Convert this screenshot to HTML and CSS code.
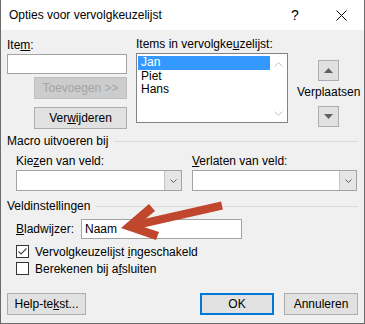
FILE: index.html
```html
<!DOCTYPE html>
<html lang="nl">
<head>
    <meta charset="UTF-8">
    <title>Opties voor vervolgkeuzelijst</title>
    <link rel="stylesheet" href="styles.css">
</head>
<body>

    <div class="dialog">
        <!-- titelbalk -->
        <div class="titlebar">
            <span class="title">Opties voor vervolgkeuzelijst</span>
            <span class="caption-btn help">?</span>
            <span class="caption-btn">
                <svg width="11" height="11" viewBox="0 0 11 11"><path d="M0.5 0.5 L10.5 10.5 M10.5 0.5 L0.5 10.5" stroke="#000" stroke-width="1"/></svg>
            </span>
        </div>

        <div class="content">
            <!-- items -->
            <div class="items">
                <div class="item-col">
                    <div class="label first">Ite<u>m</u>:</div>
                    <div class="textbox item-input"></div>
                    <button class="btn add" disabled>Toevoegen &gt;&gt;</button>
                    <button class="btn remove">Ver<u>w</u>ijderen</button>
                </div>

                <div class="list-col">
                    <div class="label list-label">Items in vervolgke<u>u</u>zelijst:</div>
                    <div class="listbox">
                        <ul class="entries">
                            <li class="selected">Jan</li>
                            <li>Piet</li>
                            <li>Hans</li>
                        </ul>
                        <div class="scroll">
                            <svg width="9" height="5" viewBox="0 0 9 5"><path d="M0.5 4.5 L4.5 0.5 L8.5 4.5" fill="none" stroke="#c2c2c2"/></svg>
                            <svg width="9" height="5" viewBox="0 0 9 5"><path d="M0.5 0.5 L4.5 4.5 L8.5 0.5" fill="none" stroke="#c2c2c2"/></svg>
                        </div>
                    </div>
                </div>

                <div class="move-col">
                    <button class="move-btn up">
                        <svg width="9" height="5" viewBox="0 0 9 5"><path d="M0 5 L4.5 0 L9 5 Z" fill="#606060"/></svg>
                    </button>
                    <span class="move-label">Verplaatsen</span>
                    <button class="move-btn down">
                        <svg width="9" height="5" viewBox="0 0 9 5"><path d="M0 0 L4.5 5 L9 0 Z" fill="#606060"/></svg>
                    </button>
                </div>
            </div>

            <!-- macro's -->
            <div class="group-title macro-title">Macro uitvoeren bij</div>
            <div class="macro">
                <div class="field">
                    <div class="label">Kie<u>z</u>en van veld:</div>
                    <div class="combo">
                        <span class="drop">
                            <svg width="7" height="4" viewBox="0 0 7 4"><path d="M0.5 0.5 L3.5 3.5 L6.5 0.5" fill="none" stroke="#5a5a5a"/></svg>
                        </span>
                    </div>
                </div>
                <div class="field">
                    <div class="label"><u>V</u>erlaten van veld:</div>
                    <div class="combo">
                        <span class="drop">
                            <svg width="7" height="4" viewBox="0 0 7 4"><path d="M0.5 0.5 L3.5 3.5 L6.5 0.5" fill="none" stroke="#5a5a5a"/></svg>
                        </span>
                    </div>
                </div>
            </div>

            <!-- veldinstellingen -->
            <div class="group-title field-title">Veldinstellingen</div>
            <div class="bookmark">
                <span class="bookmark-label"><u>B</u>ladwijzer:</span>
                <div class="textbox bookmark-input">Naam</div>
            </div>
            <div class="check first-check">
                <span class="box">
                    <svg width="11" height="11" viewBox="0 0 11 11"><path d="M1.5 5.5 L4 8 L9.5 2.5" fill="none" stroke="#444" stroke-width="1.1"/></svg>
                </span>
                <span>Vervolgkeuzelijst <u>i</u>ngeschakeld</span>
            </div>
            <div class="check">
                <span class="box"></span>
                <span>Berekenen bij a<u>f</u>sluiten</span>
            </div>

            <!-- knoppen -->
            <div class="footer">
                <button class="btn help-btn">Help-te<u>k</u>st...</button>
                <div class="actions">
                    <button class="btn ok">OK</button>
                    <button class="btn cancel">Annuleren</button>
                </div>
            </div>
        </div>

        <!-- rode pijl over de dialoog -->
        <svg class="pointer" width="365" height="324" viewBox="0 0 365 324">
            <path d="M222 205.5 L136 225" stroke="#c0462e" stroke-width="8" fill="none"/>
            <polygon points="121,228 149,204 155,211 138,225 159,232 156,240" fill="#c0462e"/>
        </svg>
    </div>

</body>
</html>
```

FILE: styles.css
```css
body, html {
    margin: 0;
    padding: 0;
    overflow: hidden;
    background: #f0f0f0;
    font-family: "Liberation Sans", Arial, sans-serif;
    font-size: 12px;
    color: #000;
}

u {
    text-decoration-thickness: 1px;
    text-underline-offset: 1px;
}

.dialog {
    position: relative;
    width: 365px;
    height: 324px;
    box-sizing: border-box;
    border: 1px solid #6b6b6b;
    border-top: none;
    background: #f0f0f0;
}

/* titelbalk */
.titlebar {
    display: flex;
    align-items: center;
    height: 30px;
    background: #fff;
}

.title {
    flex: 1;
    padding-left: 8px;
}

.caption-btn {
    display: flex;
    align-items: center;
    justify-content: center;
    width: 46px;
    height: 30px;
}

.help {
    font-size: 14px;
}

/* inhoud */
.content {
    padding: 0 6px;
}

.label {
    line-height: 15px;
    white-space: nowrap;
}

.items {
    display: grid;
    grid-template-columns: 120px 152px 1fr;
    column-gap: 9px;
}

.item-col {
    display: flex;
    flex-direction: column;
}

.label.first {
    margin-top: 8px;
}

.textbox {
    box-sizing: border-box;
    height: 20px;
    background: #fff;
    border: 1px solid #a3a3a3;
}

.item-input {
    margin-top: 1px;
}

.btn {
    box-sizing: border-box;
    height: 22px;
    padding: 0;
    background: #e1e1e1;
    border: 1px solid #adadad;
    font-family: inherit;
    font-size: 12px;
    color: #000;
}

.add {
    margin-top: 3px;
    margin-left: 27px;
    width: 93px;
    background: #cccccc;
    border-color: #bfbfbf;
    color: #a3a3a3;
}

.remove {
    margin-top: 8px;
    margin-left: 27px;
    width: 93px;
}

/* lijst */
.list-label {
    margin-top: 7px;
}

.listbox {
    display: flex;
    box-sizing: border-box;
    margin-top: 1px;
    height: 70px;
    background: #fff;
    border: 1px solid #828282;
}

.entries {
    flex: 1;
    list-style: none;
    margin: 0;
    padding: 2px 0 0 1px;
}

.entries li {
    height: 13.5px;
    line-height: 13px;
    padding-left: 3px;
}

.entries li.selected {
    background: #3399ff;
    color: #fff;
}

.scroll {
    display: flex;
    flex-direction: column;
    justify-content: space-between;
    align-items: center;
    width: 17px;
    padding: 8px 0 6px;
}

/* verplaatsen */
.move-col {
    display: flex;
    flex-direction: column;
    align-items: center;
}

.move-btn {
    display: flex;
    align-items: center;
    justify-content: center;
    width: 21px;
    height: 21px;
    padding: 0;
    background: #e1e1e1;
    border: 1px solid #adadad;
}

.move-btn.up {
    margin-top: 30px;
}

.move-label {
    margin-top: 4px;
    line-height: 15px;
}

.move-btn.down {
    margin-top: 6px;
}

/* groepen */
.group-title {
    display: flex;
    align-items: center;
    gap: 6px;
    line-height: 15px;
}

.group-title::after {
    content: "";
    flex: 1;
    border-top: 1px solid #dcdcdc;
}

.macro-title {
    margin-top: 5px;
}

.macro {
    display: grid;
    grid-template-columns: 166px 165px;
    column-gap: 10px;
    padding-left: 9px;
    margin-top: 5px;
}

.combo {
    display: flex;
    justify-content: flex-end;
    box-sizing: border-box;
    margin-top: 1px;
    height: 21px;
    background: #fff;
    border: 1px solid #a3a3a3;
}

.drop {
    display: flex;
    align-items: center;
    justify-content: center;
    width: 16px;
    background: #e5e5e5;
    border-left: 1px solid #c4c4c4;
}

.field-title {
    margin-top: 8px;
}

.bookmark {
    display: flex;
    align-items: center;
    margin-top: 5px;
    padding-left: 9px;
}

.bookmark-label {
    width: 65px;
}

.bookmark-input {
    width: 161px;
    padding-left: 3px;
    line-height: 18px;
}

.check {
    display: flex;
    align-items: center;
    gap: 6px;
    height: 17px;
    padding-left: 9px;
}

.first-check {
    margin-top: 4px;
}

.box {
    display: flex;
    align-items: center;
    justify-content: center;
    box-sizing: border-box;
    width: 13px;
    height: 13px;
    background: #fff;
    border: 1px solid #333;
}

/* knoppen onderaan */
.footer {
    display: flex;
    justify-content: space-between;
    margin-top: 16px;
}

.help-btn {
    width: 79px;
}

.actions {
    display: flex;
    gap: 10px;
}

.ok,
.cancel {
    width: 74px;
}

.ok {
    border: 2px solid #0078d7;
}

.pointer {
    position: absolute;
    top: 0;
    left: -1px;
    pointer-events: none;
}
```
